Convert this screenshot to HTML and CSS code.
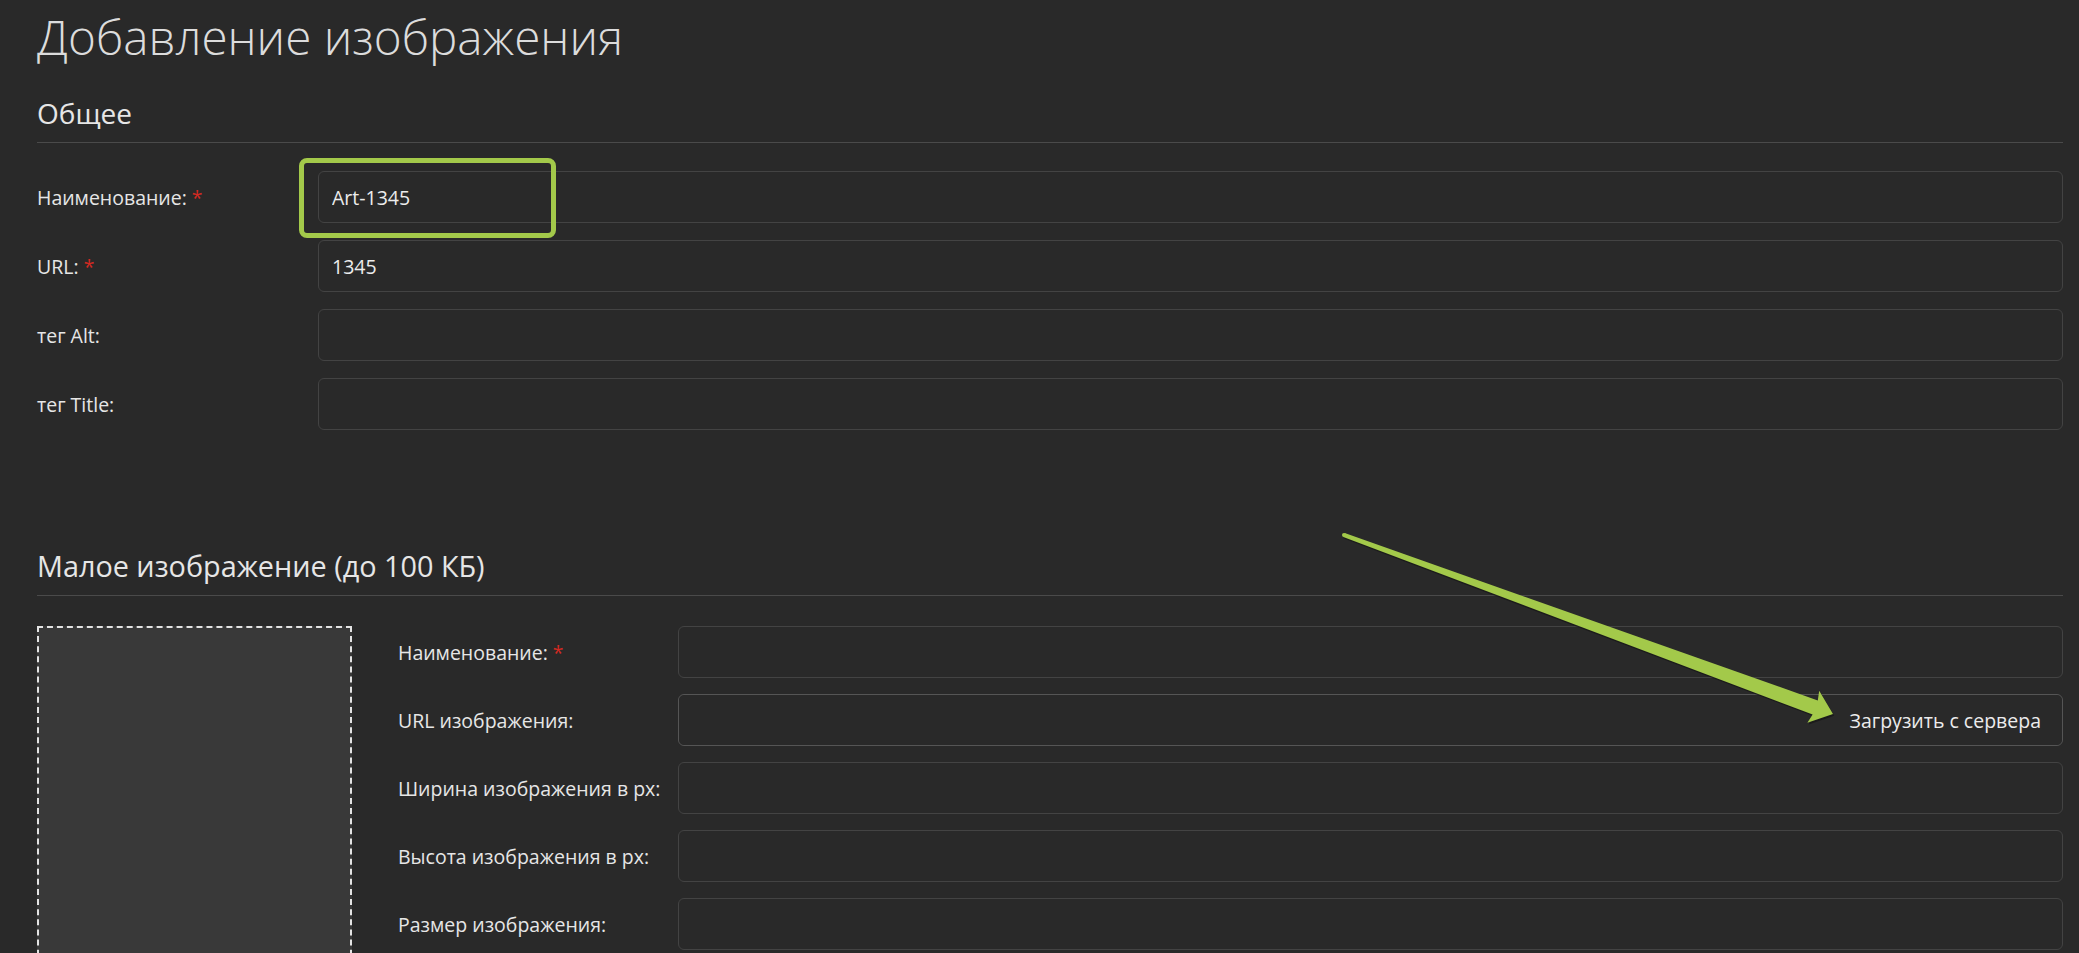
FILE: index.html
```html
<!DOCTYPE html>
<html lang="ru">
<head>
    <meta charset="UTF-8">
    <meta name="viewport" content="width=device-width, initial-scale=1.0">
    <title>Добавление изображения</title>
    <link rel="stylesheet" href="styles.css">
</head>
<body>
    <div class="page">
        <h1 class="page-title">Добавление изображения</h1>

        <section class="group">
            <h2 class="group-title">Общее</h2>
            <div class="fields">
                <label class="field-label" for="name">Наименование: <span class="req">*</span></label>
                <div class="control">
                    <input type="text" id="name" class="input" value="Art-1345">
                    <span class="mark"></span>
                </div>

                <label class="field-label" for="url">URL: <span class="req">*</span></label>
                <div class="control"><input type="text" id="url" class="input" value="1345"></div>

                <label class="field-label" for="alt">тег Alt:</label>
                <div class="control"><input type="text" id="alt" class="input"></div>

                <label class="field-label" for="titleTag">тег Title:</label>
                <div class="control"><input type="text" id="titleTag" class="input"></div>
            </div>
        </section>

        <section class="group group-small">
            <h2 class="group-title">Малое изображение (до 100 КБ)</h2>
            <div class="image-block">
                <div class="drop"></div>
                <div class="fields fields-image">
                    <label class="field-label" for="smName">Наименование: <span class="req">*</span></label>
                    <div class="control"><input type="text" id="smName" class="input"></div>

                    <label class="field-label" for="smUrl">URL изображения:</label>
                    <div class="control input-group">
                        <input type="text" id="smUrl" class="input">
                        <button type="button" class="btn-load">Загрузить с сервера</button>
                    </div>

                    <label class="field-label" for="smWidth">Ширина изображения в px:</label>
                    <div class="control"><input type="text" id="smWidth" class="input"></div>

                    <label class="field-label" for="smHeight">Высота изображения в px:</label>
                    <div class="control"><input type="text" id="smHeight" class="input"></div>

                    <label class="field-label" for="smSize">Размер изображения:</label>
                    <div class="control"><input type="text" id="smSize" class="input"></div>
                </div>
            </div>
        </section>

        <!-- annotation arrow pointing at the upload button -->
        <svg class="arrow" width="2079" height="953" viewBox="0 0 2079 953">
            <g transform="translate(1.2 1.8)" fill="#161616" opacity="0.7">
                <polygon points="1344.7,533.1 1817.8,700.4 1819.2,690.8 1833,714 1807.4,722.7 1812.6,714.5 1343.3,536.9"/>
                <circle cx="1344" cy="535" r="2"/>
            </g>
            <g fill="#a3c94a">
                <polygon points="1344.7,533.1 1817.8,700.4 1819.2,690.8 1833,714 1807.4,722.7 1812.6,714.5 1343.3,536.9"/>
                <circle cx="1344" cy="535" r="2"/>
            </g>
        </svg>
    </div>
</body>
</html>
```

FILE: styles.css
```css
body { margin: 0; background: #292929; color: #e6e6e6; font-family: "Open Sans", "Noto Sans", sans-serif; overflow: hidden; }
.page { position: relative; height: 953px; overflow: hidden; padding: 0 16px 0 37px; box-sizing: border-box; }

.page-title { margin: 0; padding-top: 7px; font-size: 47.6px; font-weight: 300; line-height: 59px; color: #dcdcdc; }

.group-title { margin: 30px 0 0; padding-bottom: 12px; border-bottom: 1px solid #4a4a4a; font-size: 28px; font-weight: 400; line-height: 34px; color: #e6e6e6; }
.group-small .group-title { margin-top: 119px; font-size: 28.8px; }

.fields { display: grid; grid-template-columns: 281px 1fr; row-gap: 17px; align-items: center; margin-top: 28px; }
.field-label { font-size: 19.5px; color: #e6e6e6; }
.req { color: #d42a22; }

.control { position: relative; }
.input { display: block; width: 100%; height: 52px; box-sizing: border-box; padding: 0 13px; border: 1px solid #434343; border-radius: 6px; background: #292929; color: #ececec; font-family: inherit; font-size: 19.5px; outline: none; }

/* green highlight around the first field */
.mark { position: absolute; left: -19px; top: -13px; width: 257px; height: 80px; box-sizing: border-box; border: 5px solid #a3c94a; border-radius: 8px; pointer-events: none; }

.image-block { display: flex; align-items: flex-start; margin-top: 30px; }
.drop { flex: 0 0 315px; height: 360px; box-sizing: border-box; margin-right: 46px; border: 2px dashed #e4e4e4; background: #393939; }
.fields-image { flex: 1; margin-top: 0; grid-template-columns: 280px 1fr; row-gap: 16px; }

.input-group { display: flex; height: 52px; box-sizing: border-box; border: 1px solid #555; border-radius: 6px; }
.input-group .input { flex: 1; height: 50px; border: none; border-radius: 6px 0 0 6px; }
.btn-load { padding: 0 21px 0 20px; border: none; border-radius: 0 6px 6px 0; background: #292929; color: #ececec; font-family: inherit; font-size: 19.5px; cursor: pointer; }

.arrow { position: absolute; left: 0; top: 0; pointer-events: none; }
```
